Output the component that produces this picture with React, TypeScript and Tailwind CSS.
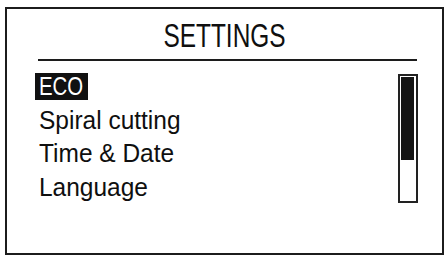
import React from 'react';

const items = ['ECO', 'Spiral cutting', 'Time & Date', 'Language'];

export default function App() {
  const selected = 0;

  return (
    <div className="w-[445px] h-[256px] bg-white pt-[7px] pl-[5px] font-['Liberation_Sans',Arial,sans-serif] text-[#0f0f0f]">
      <div className="w-[439px] h-[248px] border-2 border-[#1c1c1c] flex flex-col">
        {/* Title */}
        <div className="pt-[10px] flex justify-center">
          <span className="inline-block text-[33px] leading-[33px] scale-x-[0.74]">SETTINGS</span>
        </div>
        <div className="mt-[7px] ml-[31px] w-[379px] h-[2px] bg-[#1c1c1c]" />

        {/* Menu list + scrollbar */}
        <div className="mt-[9px] flex">
          <div className="flex-1 pl-[28px] flex flex-col">
            {items.map((item, i) => (
              <div key={item} className="h-[33.5px] flex items-center">
                {i === selected ? (
                  <span className="bg-[#111] text-white px-[4px] text-[25.5px] leading-[27px]">
                    <span className="inline-block origin-left scale-x-[0.8] -mr-[10px]">{item}</span>
                  </span>
                ) : (
                  <span className="px-[4px] text-[25.5px] leading-[27px]">
                    <span className="inline-block origin-left scale-x-[0.96]">{item}</span>
                  </span>
                )}
              </div>
            ))}
          </div>
          <div className="mt-[4px] mr-[24px] w-[20px] h-[129px] border-2 border-[#222] pt-[1px] pl-[1px] pr-[2px]">
            <div className="w-full h-[83px] bg-[#151515]" />
          </div>
        </div>
      </div>
    </div>
  );
}
